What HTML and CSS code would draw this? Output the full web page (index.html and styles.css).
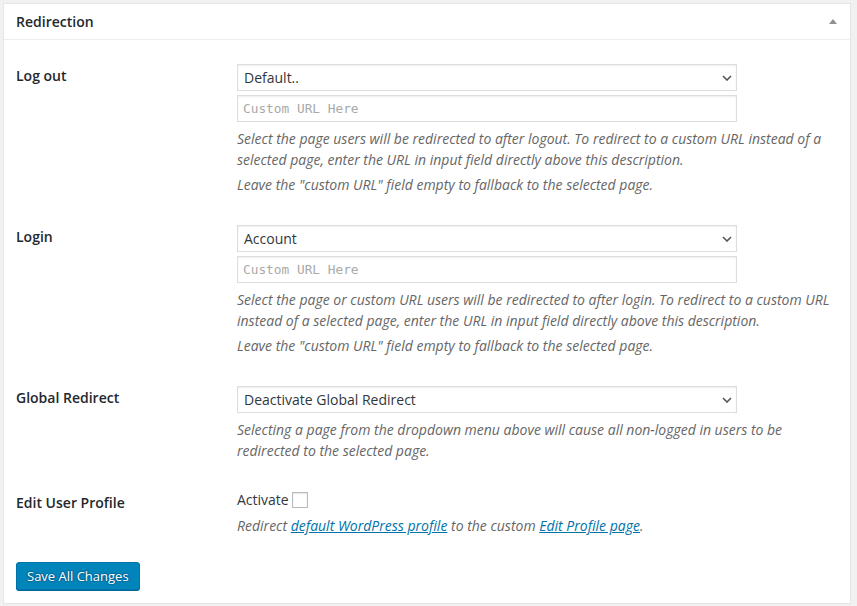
FILE: index.html
```html
<!DOCTYPE html>
<html>
<head>
<meta charset="utf-8">
<link rel="stylesheet" href="styles.css">
</head>
<body>
<div class="postbox">
  <div class="postbox-head">
    <h2 class="hndle">Redirection</h2>
    <span class="toggle"><svg width="10" height="6" viewBox="0 0 10 6"><path d="M1 6 L5 1 L9 6 Z" fill="#8c9196"/></svg></span>
  </div>
  <div class="inside">
    <div class="row">
      <div class="label">Log out</div>
      <div class="field">
        <div class="select-wrap">
          <select class="sel"><option>Default..</option></select>
          <svg class="chev" width="10" height="6" viewBox="0 0 10 6"><path d="M1 1 L5 5 L9 1" fill="none" stroke="#555" stroke-width="1.6"/></svg>
        </div>
        <input class="url" type="text" placeholder="Custom URL Here">
        <p class="desc">Select the page users will be redirected to after logout. To redirect to a custom URL instead of a selected page, enter the URL in input field directly above this description.</p>
        <p class="desc">Leave the "custom URL" field empty to fallback to the selected page.</p>
      </div>
    </div>
    <div class="row">
      <div class="label">Login</div>
      <div class="field">
        <div class="select-wrap">
          <select class="sel"><option>Account</option></select>
          <svg class="chev" width="10" height="6" viewBox="0 0 10 6"><path d="M1 1 L5 5 L9 1" fill="none" stroke="#555" stroke-width="1.6"/></svg>
        </div>
        <input class="url" type="text" placeholder="Custom URL Here">
        <p class="desc">Select the page or custom URL users will be redirected to after login. To redirect to a custom URL instead of a selected page, enter the URL in input field directly above this description.</p>
        <p class="desc">Leave the "custom URL" field empty to fallback to the selected page.</p>
      </div>
    </div>
    <div class="row">
      <div class="label">Global Redirect</div>
      <div class="field">
        <div class="select-wrap">
          <select class="sel"><option>Deactivate Global Redirect</option></select>
          <svg class="chev" width="10" height="6" viewBox="0 0 10 6"><path d="M1 1 L5 5 L9 1" fill="none" stroke="#555" stroke-width="1.6"/></svg>
        </div>
        <p class="desc">Selecting a page from the dropdown menu above will cause all non-logged in users to be redirected to the selected page.</p>
      </div>
    </div>
    <div class="row">
      <div class="label">Edit User Profile</div>
      <div class="field">
        <label class="activate">Activate <span class="checkbox"></span></label>
        <p class="desc">Redirect <a href="#">default WordPress profile</a> to the custom <a href="#">Edit Profile page</a>.</p>
      </div>
    </div>
    <div class="submit">
      <button class="button-primary" type="button">Save All Changes</button>
    </div>
  </div>
</div>
</body>
</html>
```
FILE: styles.css
```css
html, body {
  background: #f1f1f1;
}
body {
  margin: 3px 6px 2px 3px;
  font-family: "Open Sans", "Liberation Sans", sans-serif;
  color: #444;
  font-size: 13px;
}
.postbox {
  background: #fff;
  border: 1px solid #e5e5e5;
  box-shadow: 0 1px 1px rgba(0,0,0,.04);
}
.postbox-head {
  display: flex;
  align-items: center;
  justify-content: space-between;
  border-bottom: 1px solid #eee;
  height: 35px;
  padding: 0 12px 0 12px;
}
.hndle {
  margin: 0;
  font-size: 14px;
  font-weight: 600;
  color: #23282d;
  line-height: 1;
}
.toggle {
  display: flex;
  align-items: center;
  margin-top: -1px;
}
.inside {
  padding: 9px 12px 13px 12px;
}
.row {
  display: flex;
}
.label {
  width: 221px;
  flex: none;
  padding-top: 18px;
  font-size: 14px;
  font-weight: 600;
  color: #23282d;
  line-height: 18px;
}
.field {
  flex: 1;
  padding: 15px 0 15px 0;
}
.select-wrap {
  position: relative;
  width: 500px;
}
.sel {
  display: block;
  width: 500px;
  height: 27px;
  margin: 0;
  padding: 0 24px 0 6px;
  border: 1px solid #ddd;
  box-shadow: inset 0 1px 2px rgba(0,0,0,.07);
  background: #fff;
  -webkit-appearance: none;
  appearance: none;
  font-family: "Open Sans", sans-serif;
  font-size: 14px;
  color: #32373c;
  border-radius: 0;
  outline: none;
}
.chev {
  position: absolute;
  right: 5px;
  top: 11px;
  pointer-events: none;
}
.url {
  display: block;
  box-sizing: border-box;
  width: 500px;
  height: 27px;
  margin: 4px 0 0 0;
  padding: 0 5px;
  border: 1px solid #ddd;
  box-shadow: inset 0 1px 2px rgba(0,0,0,.07);
  font-family: "DejaVu Sans Mono", "Liberation Mono", monospace;
  font-size: 12.8px;
  color: #32373c;
  outline: none;
}
.url::placeholder {
  color: #a9a9a9;
}
.desc {
  margin: 6px 0 0 0;
  font-style: italic;
  font-size: 14px;
  line-height: 21px;
  color: #666;
}
.desc + .desc {
  margin-top: 4px;
}
.desc a {
  color: #0073aa;
  text-decoration: underline;
}
.activate {
  display: flex;
  align-items: center;
  font-size: 14px;
  color: #32373c;
  line-height: 18px;
  height: 18px;
}
.checkbox {
  display: inline-block;
  width: 14px;
  height: 14px;
  margin-left: 3px;
  border: 1px solid #b4b9be;
  box-shadow: inset 0 1px 2px rgba(0,0,0,.1);
  background: #fff;
}
.activate + .desc {
  margin-top: 6px;
}
.submit {
  padding-top: 11px;
}
.button-primary {
  height: 28px;
  padding: 0 10px 1px;
  font-family: "Open Sans", sans-serif;
  font-size: 13px;
  line-height: 26px;
  color: #fff;
  background: #0085ba;
  border: 1px solid #0073aa;
  border-radius: 3px;
  box-shadow: 0 1px 0 #006799;
  text-shadow: 0 -1px 1px #006799, 1px 0 1px #006799, 0 1px 1px #006799, -1px 0 1px #006799;
  cursor: pointer;
}
```
